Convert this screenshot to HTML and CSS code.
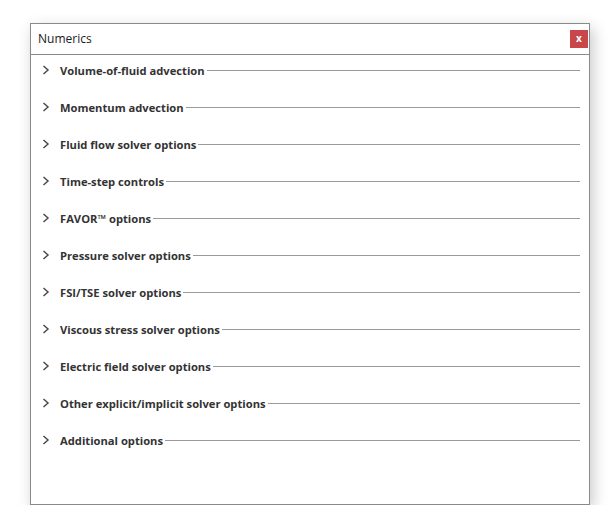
FILE: index.html
```html
<!DOCTYPE html>
<html>
<head>
<meta charset="utf-8">
<link rel="stylesheet" href="styles.css">
</head>
<body>
<div class="window">
  <div class="titlebar">
    <span class="title">Numerics</span>
    <span class="close">x</span>
  </div>
  <div class="sections">
    <div class="row"><svg class="chev" width="8" height="10" viewBox="0 0 8 10"><polyline points="1.5,1 6,5 1.5,9" /></svg><span class="label">Volume-of-fluid advection</span><span class="rule"></span></div>
    <div class="row"><svg class="chev" width="8" height="10" viewBox="0 0 8 10"><polyline points="1.5,1 6,5 1.5,9" /></svg><span class="label">Momentum advection</span><span class="rule"></span></div>
    <div class="row"><svg class="chev" width="8" height="10" viewBox="0 0 8 10"><polyline points="1.5,1 6,5 1.5,9" /></svg><span class="label">Fluid flow solver options</span><span class="rule"></span></div>
    <div class="row"><svg class="chev" width="8" height="10" viewBox="0 0 8 10"><polyline points="1.5,1 6,5 1.5,9" /></svg><span class="label">Time-step controls</span><span class="rule"></span></div>
    <div class="row"><svg class="chev" width="8" height="10" viewBox="0 0 8 10"><polyline points="1.5,1 6,5 1.5,9" /></svg><span class="label">FAVOR™ options</span><span class="rule"></span></div>
    <div class="row"><svg class="chev" width="8" height="10" viewBox="0 0 8 10"><polyline points="1.5,1 6,5 1.5,9" /></svg><span class="label">Pressure solver options</span><span class="rule"></span></div>
    <div class="row"><svg class="chev" width="8" height="10" viewBox="0 0 8 10"><polyline points="1.5,1 6,5 1.5,9" /></svg><span class="label">FSI/TSE solver options</span><span class="rule"></span></div>
    <div class="row"><svg class="chev" width="8" height="10" viewBox="0 0 8 10"><polyline points="1.5,1 6,5 1.5,9" /></svg><span class="label">Viscous stress solver options</span><span class="rule"></span></div>
    <div class="row"><svg class="chev" width="8" height="10" viewBox="0 0 8 10"><polyline points="1.5,1 6,5 1.5,9" /></svg><span class="label">Electric field solver options</span><span class="rule"></span></div>
    <div class="row"><svg class="chev" width="8" height="10" viewBox="0 0 8 10"><polyline points="1.5,1 6,5 1.5,9" /></svg><span class="label">Other explicit/implicit solver options</span><span class="rule"></span></div>
    <div class="row"><svg class="chev" width="8" height="10" viewBox="0 0 8 10"><polyline points="1.5,1 6,5 1.5,9" /></svg><span class="label">Additional options</span><span class="rule"></span></div>
  </div>
</div>
</body>
</html>
```

FILE: styles.css
```css
html, body {
  margin: 0;
  padding: 0;
  background: #ffffff;
}
body {
  padding: 23px 0 0 30px;
  font-family: "Open Sans", "Noto Sans", sans-serif;
}
.window {
  width: 558px;
  height: 480px;
  border: 1px solid #8a8a8a;
  background: #ffffff;
  box-shadow: 3px 5px 14px rgba(0, 0, 0, 0.22);
  display: flex;
  flex-direction: column;
}
.titlebar {
  height: 30px;
  border-bottom: 1px solid #8a8a8a;
  display: flex;
  align-items: center;
  justify-content: space-between;
  padding: 0 1px 1px 7px;
  box-sizing: border-box;
  height: 31px;
}
.title {
  font-size: 12px;
  color: #1a1a1a;
}
.close {
  width: 18px;
  height: 18px;
  background: #c9474a;
  color: #ffffff;
  font-size: 10px;
  font-weight: bold;
  line-height: 17px;
  text-align: center;
}
.sections {
  padding: 7px 9px 0 10px;
  display: flex;
  flex-direction: column;
  gap: 21px;
}
.row {
  height: 16px;
  display: flex;
  align-items: center;
}
.chev {
  margin-left: 1px;
  margin-right: 10px;
}
.chev polyline {
  fill: none;
  stroke: #4a4a4a;
  stroke-width: 1.5;
}
.label {
  font-size: 11.2px;
  font-weight: bold;
  color: #333333;
  white-space: nowrap;
}
.rule {
  flex: 1;
  height: 1px;
  background: #9a9a9a;
  margin-left: 2px;
}
```
